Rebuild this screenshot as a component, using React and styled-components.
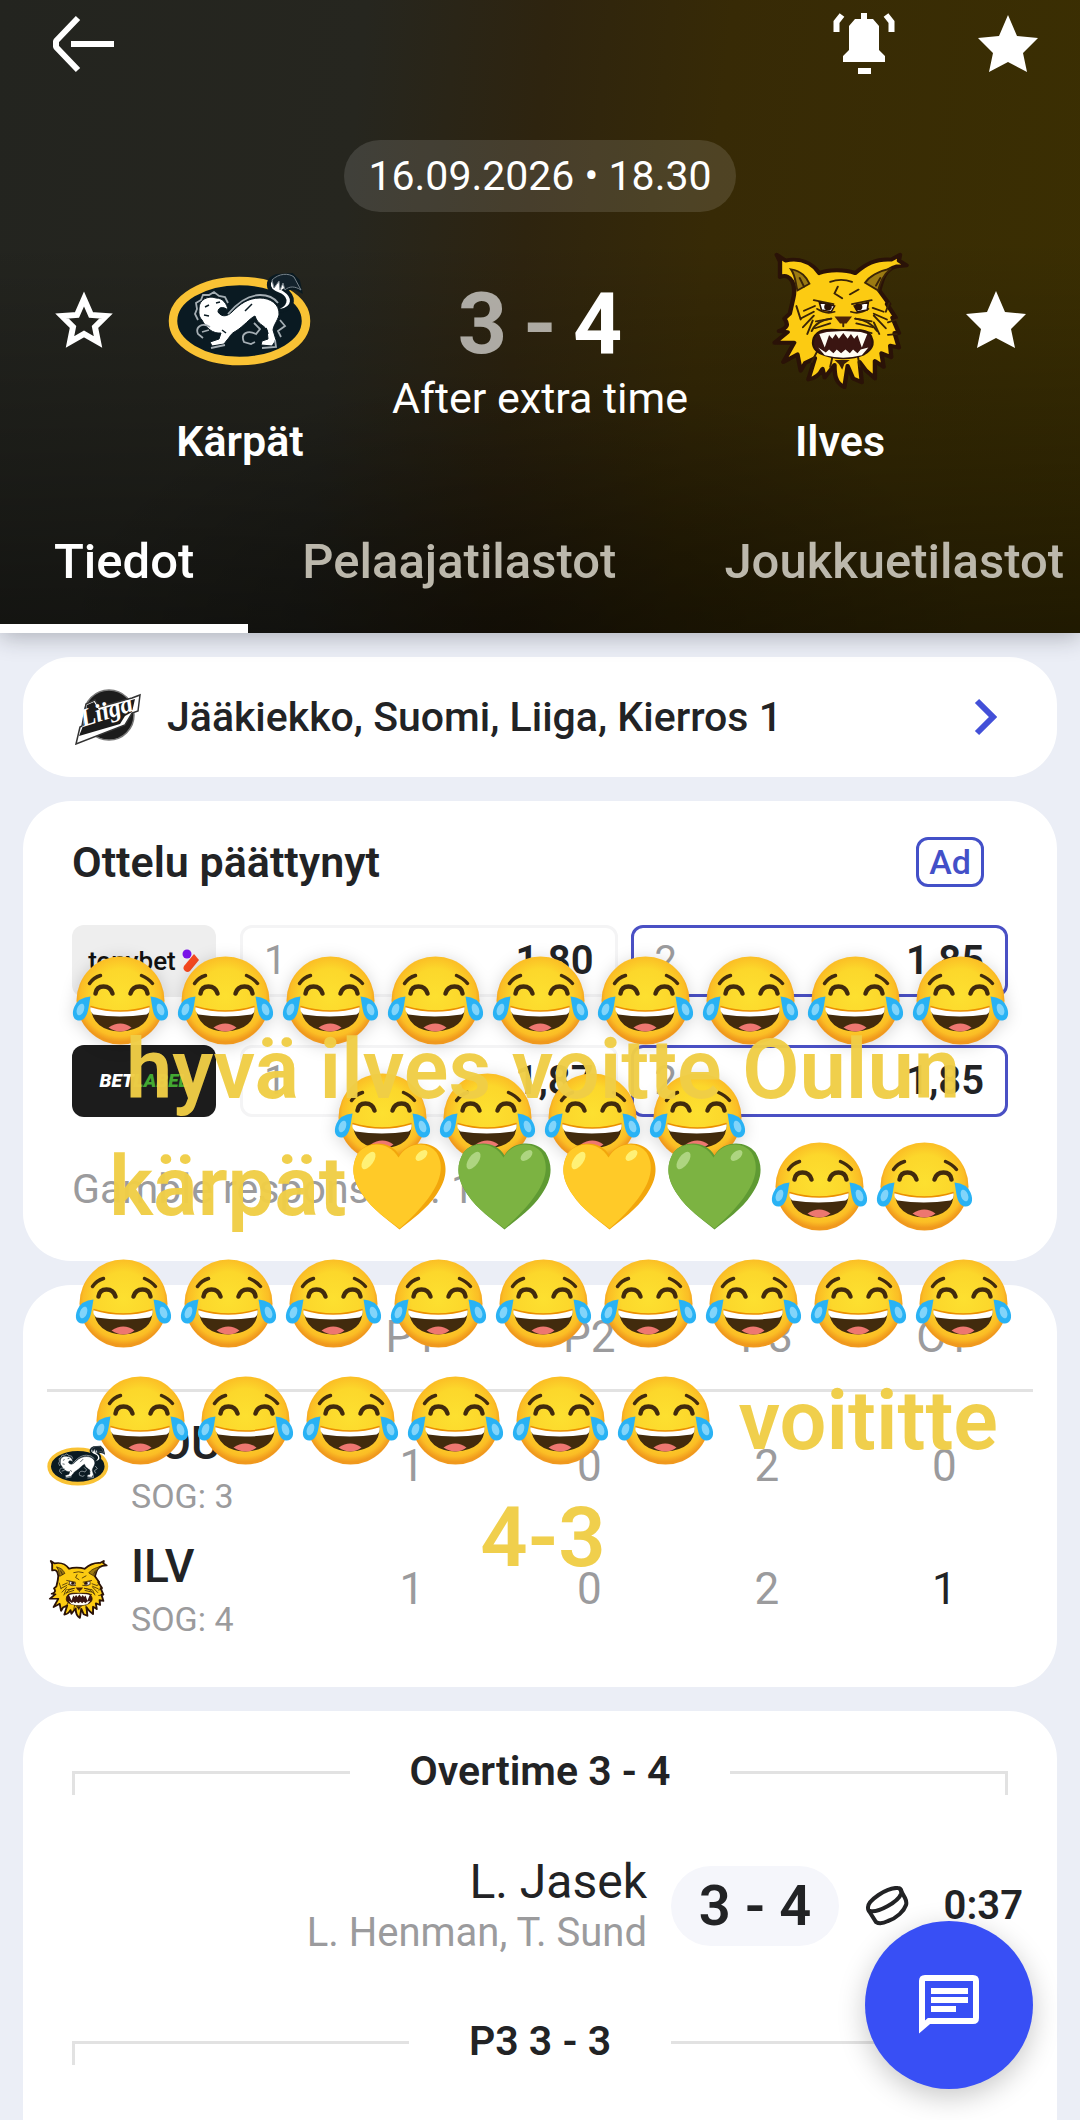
import styled, { createGlobalStyle, css } from 'styled-components';

const GlobalStyle = createGlobalStyle`
  *,
  *::before,
  *::after {
    box-sizing: border-box;
  }

  body {
    margin: 0;
    background: #ebeef6;
    color: #222325;
    font-family: Roboto, 'Liberation Sans', sans-serif;
    font-size: 41px;
    line-height: 48px;
  }

  button {
    margin: 0;
    padding: 0;
    border: 0;
    background: none;
    color: inherit;
    font: inherit;
    cursor: pointer;
  }

  svg {
    display: block;
    flex: none;
  }
`;

const Page = styled.div`
  position: relative;
  display: flex;
  flex-direction: column;
  min-height: 100vh;
  overflow: hidden;
`;

/* ---------- header ---------- */

const Header = styled.header`
  position: relative;
  color: #fff;
  background: linear-gradient(180deg, rgba(0, 0, 0, 0) 38%, rgba(0, 0, 0, 0.24) 72%, rgba(0, 0, 0, 0.46) 100%),
    radial-gradient(ellipse 460px 260px at 48% 100%, rgba(0, 0, 0, 0.3), rgba(0, 0, 0, 0)),
    linear-gradient(96deg, #23241f 0%, #26261f 32%, #2e240f 48%, #372a06 64%, #3b2f02 100%);
  box-shadow: 0 4px 22px rgba(30, 34, 44, 0.3);
`;

const TopBar = styled.div`
  display: flex;
  align-items: center;
  justify-content: space-between;
  height: 88px;
  padding: 0 24px 0 36px;
`;

const TopActions = styled.div`
  display: flex;
  gap: 48px;
`;

const IconButton = styled.button`
  display: flex;
  align-items: center;
  justify-content: center;
  width: 96px;
  height: 88px;
`;

const KickOff = styled.div`
  width: max-content;
  margin: 52px auto 0;
  padding: 12px 24px;
  border-radius: 36px;
  background: rgba(255, 255, 255, 0.12);
`;

const Teams = styled.div`
  display: grid;
  grid-template-columns: 168px 144px 1fr 144px 168px;
  align-items: start;
  padding-top: 36px;
  font-size: 43px;
`;

const FavouriteButton = styled(IconButton)`
  width: 100%;
  height: 144px;
`;

const Team = styled.div`
  display: flex;
  flex-direction: column;
  align-items: center;
  gap: 25px;
  font-weight: 600;
`;

const Score = styled.div`
  display: flex;
  flex-direction: column;
  align-items: center;
  padding-top: 26px;
`;

const Goals = styled.div`
  display: flex;
  gap: 16px;
  font-size: 86px;
  line-height: 100px;
  font-weight: 700;
`;

const Goal = styled.span`
  opacity: ${({ $faded }) => ($faded ? 0.62 : 1)};
`;

const Tabs = styled.nav`
  display: flex;
  margin-top: 42px;
  overflow: hidden;
`;

const Tab = styled.button`
  flex: none;
  height: 126px;
  padding: 0 54px 8px;
  border-bottom: 9px solid ${({ $active }) => ($active ? '#fff' : 'transparent')};
  color: ${({ $active }) => ($active ? '#fff' : '#bcb8ac')};
  font-size: 49px;
  font-weight: 500;
`;

/* ---------- cards ---------- */

const Cards = styled.main`
  flex: 1;
  display: flex;
  flex-direction: column;
  gap: 24px;
  padding: 24px 23px 0;
`;

const Card = styled.section`
  border-radius: 48px;
  background: #fff;
`;

const LeagueLink = styled.a`
  display: flex;
  align-items: center;
  height: 120px;
  padding: 0 60px 0 52px;
  gap: 26px;
  border-radius: 48px;
  background: #fff;
  color: inherit;
  font-weight: 500;
  text-decoration: none;
`;

const LeagueName = styled.span`
  flex: 1;
`;

const OddsCard = styled(Card)`
  padding: 36px 49px 48px;
`;

const OddsHead = styled.div`
  display: flex;
  align-items: center;
  justify-content: space-between;
`;

const OddsTitle = styled.h2`
  margin: 0;
  font-size: 43px;
  font-weight: 600;
`;

const AdBadge = styled.span`
  margin-right: 24px;
  padding: 0 10px;
  border: 3px solid #4350c8;
  border-radius: 12px;
  color: #4350c8;
  font-size: 34px;
  font-weight: 500;
  line-height: 44px;
`;

const OddsRow = styled.div`
  display: grid;
  grid-template-columns: 144px 1fr;
  gap: 24px;
  height: 72px;
  margin-top: ${({ $first }) => ($first ? '38px' : '48px')};
`;

const Bookmaker = styled.a`
  display: flex;
  align-items: center;
  justify-content: center;
  gap: 6px;
  border-radius: 12px;
  background: ${({ $dark }) => ($dark ? '#1c1c1c' : '#eee')};
  color: ${({ $dark }) => ($dark ? '#fff' : '#111')};
  font-size: ${({ $dark }) => ($dark ? '19px' : '26px')};
  font-weight: ${({ $dark }) => ($dark ? '900' : '500')};
  font-style: ${({ $dark }) => ($dark ? 'italic' : 'normal')};
  text-decoration: none;

  b {
    margin-left: -6px;
    color: #43a832;
  }
`;

const OddsPair = styled.div`
  display: grid;
  grid-template-columns: 1fr 1fr;
  gap: 13px;
`;

const OddButton = styled.button`
  display: flex;
  align-items: center;
  justify-content: space-between;
  padding: 0 21px;
  border: 3px solid ${({ $best }) => ($best ? '#4a50c4' : '#f4f4f5')};
  border-radius: 12px;
  font-size: 40px;
  font-weight: 600;
`;

const OddLabel = styled.span`
  color: #9b9b9d;
  font-weight: 400;
`;

const Disclaimer = styled.p`
  margin: 48px 0 0;
  color: #9b9b9d;
`;

const PeriodCard = styled(Card)`
  padding: 0 24px 36px;
`;

const PeriodTable = styled.table`
  width: 100%;
  border-collapse: collapse;
  table-layout: fixed;

  th,
  td {
    height: 124px;
    padding: 0;
    font-weight: 400;
    text-align: center;
  }

  thead th {
    height: 105px;
    border-bottom: 3px solid #e2e2e2;
    color: #9b9b9d;
    font-size: 44px;
  }

  thead th:first-child {
    width: 28%;
  }

  tbody tr:first-child > * {
    height: 137px;
    padding-top: 13px;
  }
`;

const PeriodCell = styled.td`
  color: ${({ $strong }) => ($strong ? '#222325' : '#9b9b9d')};
  font-size: 44px;
`;

const TeamCell = styled.div`
  display: flex;
  align-items: center;
  gap: 22px;
  text-align: left;
`;

const TeamCode = styled.div`
  padding-top: 6px;
  font-size: 46px;
  font-weight: 500;
  line-height: 54px;
`;

const Shots = styled.div`
  padding: 6px 0;
  color: #9b9b9d;
  font-size: 34px;
  line-height: 40px;
`;

const EventsCard = styled(Card)`
  flex: 1;
  border-radius: 48px 48px 0 0;
  padding: 36px 49px 0;
`;

const PeriodDivider = styled.h3`
  display: flex;
  align-items: center;
  gap: 60px;
  height: 48px;
  margin: 0;
  font-size: 41px;
  font-weight: 600;

  &::before,
  &::after {
    content: '';
    flex: 1;
    align-self: flex-end;
    height: 24px;
    border-top: 3px solid #e2e2e2;
  }

  &::before {
    border-left: 3px solid #e2e2e2;
  }

  &::after {
    border-right: 3px solid #e2e2e2;
  }
`;

const Event = styled.div`
  display: flex;
  align-items: center;
  justify-content: flex-end;
  height: 222px;
  margin-right: -15px;
`;

const Scorer = styled.div`
  text-align: right;
  font-size: 48px;
  line-height: 54px;

  small {
    display: block;
    color: #9b9b9d;
    font-size: 40px;
    line-height: 48px;
  }
`;

const EventScore = styled.div`
  width: 168px;
  margin: 0 26px 0 24px;
  border-radius: 40px;
  background: #f5f6fb;
  font-size: 56px;
  font-weight: 600;
  line-height: 80px;
  text-align: center;
`;

const EventTime = styled.time`
  width: 114px;
  font-size: 40px;
  font-weight: 600;
  text-align: right;
`;

const ChatButton = styled.button`
  position: fixed;
  right: 47px;
  bottom: 31px;
  display: flex;
  align-items: center;
  justify-content: center;
  width: 168px;
  height: 168px;
  border-radius: 50%;
  background: #384ff5;
  box-shadow: 0 8px 28px rgba(0, 0, 0, 0.22);
`;

/* ---------- stickers lying over the page ---------- */

const Sticker = styled.div`
  position: absolute;
  left: 0;
  right: 0;
  display: flex;
  flex-direction: column;
  align-items: center;
  pointer-events: none;
  color: rgba(240, 205, 70, 0.97);
  font-size: 83px;
  font-weight: 600;
  line-height: 117px;

  ${({ $shadow }) =>
    $shadow
      ? css`
          top: 942px;
          filter: drop-shadow(0 2px 8px rgba(0, 0, 0, 0.16));
        `
      : css`
          top: 1011px;
          padding-left: 6px;
        `}
`;

const StickerLine = styled.div`
  display: flex;
  align-items: center;
  height: 117px;
  white-space: pre;
`;

/* ---------- drawings ---------- */

function BackIcon() {
  return (
    <svg width='64' height='60' viewBox='0 0 64 60' fill='none' stroke='#fff' strokeWidth='6'>
      <path d='M26 4 4 27v6l22 23' strokeLinejoin='bevel' />
      <path d='M19 30h43' />
    </svg>
  );
}

function BellIcon() {
  return (
    <svg width='62' height='62' viewBox='0 0 62 62'>
      <path
        fill='#fff'
        d='M28 0h6v6h6l6 7v24l6 6v6H10v-6l6-6V13l6-7h6zM25 55h13v6H25z'
      />
      <path d='M9 2 3.500 9v10M53 2l5.500 7v10' fill='none' stroke='#fff' strokeWidth='6' />
    </svg>
  );
}

function StarIcon({ filled }) {
  return (
    <svg width='60' height='58' viewBox='0 0 60 58'>
      <path
        fill={filled ? '#fff' : 'none'}
        stroke={filled ? 'none' : '#fff'}
        strokeWidth='6'
        d={
          filled
            ? 'M30 0l9 21 21 2-15 15 4 19-19-10-19 10 4-19L0 23l21-2z'
            : 'M30 8l7 16 15 1-11 11 3 15-14-8-14 8 3-15L8 25l15-1z'
        }
      />
    </svg>
  );
}

function KarpatLogo({ size }) {
  return (
    <svg width={size} height={size} viewBox='0 0 144 144' aria-hidden='true'>
      <ellipse cx='71.500' cy='73' rx='66.500' ry='40' fill='#0a1a22' stroke='#f9c234' strokeWidth='8.500' />
      <path
        d='M108 60C118 57 119 51 112 47C104 44 100 41 101 35C102 30 106 29 109 28L124 27L130 33L132 42C127 39 122 39 117 42C126 48 128 60 112 63z'
        fill='#fff'
        stroke='#0a1a22'
        strokeWidth='4'
      />
      <path
        d='M104 32C111 25 121 25 126 29L133 42C127 38 121 38 117 42L115 35L112 42L111 33L106 40z'
        fill='#13222c'
        stroke='#77828a'
        strokeWidth='1'
      />
      <path
        d='M31 60C31 52 40 47 48 50C55 50 59 56 60 62C55 58 50 59 50 64C54 70 60 68 64 64C72 56 80 50 92 50C102 50 112 56 111 67C109 74 106 76 105 82L108 92L104 98L93 97L94 93L100 91L99 82C95 76 90 77 87 68C82 70 76 78 68 83C62 86 62 89 59 92L56 96L44 98L42 94L51 91L53 85C45 86 38 80 34 72C30 68 31 64 31 60z'
        fill='#fff'
        stroke='#0a1a22'
        strokeWidth='1'
      />
      <path
        d='M60 66C70 54 80 47 92 47Q104 47 110 55M30 72l-3-6 2-5-1-6 5-3 2-5 6 0 5-3 5 4 6 1 3 6M42 79c-8-5-15 0-12 7l5 4M34 84l7-2M86 75l6 6-4 5c-8-4-16-1-12 8l7 2 4-2M112 72l5 6-7 5 3 6M107 92l1 7-14 1M57 97l-14 3'
        fill='none'
        stroke='#a5aeb4'
        strokeWidth='1.800'
      />
      <path d='M37 59l4-2M48 55l4-1M36 67l5 1M84 56l-7 7M98 80l2 6M54 82l4 3' fill='none' stroke='#0a1a22' strokeWidth='1.500' />
    </svg>
  );
}

function IlvesLogo({ size }) {
  return (
    <svg width={size} height={size} viewBox='4 3 132 149' preserveAspectRatio='none' aria-hidden='true'>
      <path
        d='M9 13l-3-7 8 6c13-3 24 2 31 13 8-4 24-4 33 0 9-9 18-15 33-14l8-5-1 6 7 5-9 1c-11 3-13 12-16 25l9 14-2 0 8 14-3 0 6 16-4 0 4 15-8-2 1 12-9-4 2 14-8-6v18l-8-8-6-9 2 21-8-4-5-13-3 22c-9-5-9-15-9-23l-9 13-2-9c-3 7-7 10-13 11l6-22-9 5-4 8-3-17-13 8 10-20H4l12-11-8-1c8-3 9-7 5-13l5-5 3-15c3-13-1-28-12-23z'
        transform='translate(6 4)'
        fill='#fccb12'
        stroke='#2a1207'
        strokeWidth='4'
        strokeLinejoin='round'
      />
      <g fill='none' stroke='#3a2407' strokeWidth='1.800' strokeLinecap='round'>
        <path d='M25 25c10 2 14 8 17 15l-11 7c-2-6-1-14-6-22z' fill='#9b7a12' />
        <path d='M117 24c-12 3-20 8-24 15l12 8c2-8 4-16 12-23z' fill='#9b7a12' />
        <path d='M33 34l4 9M107 34l-4 8M61 38q10-4 20 0M68 43l-3 7 7 5M79 51l8-5' />
        <path d='M46 57l18 4M99 57l-18 4M49 66q8 6 16 3M96 66q-8 6-16 3' />
        <path d='M37 68l10-5M34 76l12-7M36 85l10-12M40 92l5-14M110 69l-10-4M113 77l-12-6M112 86l-11-13M106 92l-5-12' />
        <path d='M48 79l14-3M47 86l14-5M49 92l9-3M99 79l-15-3M100 85l-15-4M99 91l-11-3M30 63l4 14M115 60l-3 9M122 77l-8 3M122 92l-8 1' />
        <path d='M62 76q-14 2-18 13M84 76q14 2 20 13M73 80v4M44 121l6-13M61 126l3-15M88 126l-2-14' />
      </g>
      <path d='M51 59l14 4-3 6-9-2zM96 59l-13 4 3 6 9-2z' fill='#fff' stroke='#2a1207' strokeWidth='1.500' />
      <circle cx='59' cy='64' r='3.500' fill='#2a1207' />
      <circle cx='87' cy='64' r='3.500' fill='#2a1207' />
      <path d='M65 74h16l-5 7h-6z' fill='#4b2208' />
      <path
        d='M46 96c5-11 15-8 27-8s23-2 26 8c3 8-1 13-7 17-13 6-28 5-40-1-7-4-8-9-6-16z'
        fill='#3a1511'
        stroke='#2a1207'
        strokeWidth='2'
      />
      <path
        d='M51 92l5 14 4-13 3 4 3-5 3 5 4-6 4 6 3-5 3 5 3-4 4 13 5-14-6-2-16-1-15 1zM50 106l7 5 3-3 4 4 3-4 4 4 4-4 4 4 3-4 4 4 3-4 7-2-6 8q-17 5-34 0z'
        fill='#fffdf4'
      />
      <path d='M65 119h14l-5 4-2 6-3-6z' fill='#3a1e07' />
    </svg>
  );
}

function LiigaLogo() {
  return (
    <svg width='66' height='56' viewBox='0 0 66 56' role='img' aria-label='Liiga'>
      <circle cx='34' cy='26' r='25' fill='#1c1c1c' stroke='#777' strokeWidth='1.500' />
      <path d='M1 55l4-17 2-1 4-22 9-4 4 7 33-9 8-3-2 16-6 2-7 12z' fill='#fff' stroke='#333' strokeWidth='1.500' />
      <path d='M8 37L12 16l7-3 5 8 36-11-3 13-7 4-5 8L4 47z' fill='#1c1c1c' />
      <text
        x='8'
        y='38'
        transform='rotate(-18 8 38)'
        fill='#fff'
        fontFamily='Liberation Serif, serif'
        fontSize='25'
        fontWeight='700'
        fontStyle='italic'
      >
        Liiga
      </text>
    </svg>
  );
}

function ChevronIcon() {
  return (
    <svg width='26' height='38' viewBox='0 0 26 38' fill='none' stroke='#4350d8' strokeWidth='6'>
      <path d='M6 3l16 16L6 35' />
    </svg>
  );
}

function TonyMark() {
  return (
    <svg width='18' height='24' viewBox='0 0 18 24'>
      <path d='M12 5l5 6-9 11a4 4 0 0 1-6-5z' fill='#f5481f' />
      <circle cx='5' cy='5' r='4.500' fill='#7a12e8' />
    </svg>
  );
}

function PuckIcon() {
  return (
    <svg width='44' height='40' viewBox='0 0 44 40' fill='none' stroke='#222325' strokeWidth='4'>
      <path d='M3 22C2 15 22 1 33 2c3 0 4 3 3 6C33 16 13 27 5 25c-2 0-2-2-2-3z' />
      <path d='M4 25l7 11c3 2 8 1 12-1 9-3 16-10 18-16 1-3 0-5-1-7l-5-9' />
    </svg>
  );
}

function ChatIcon() {
  return (
    <svg width='62' height='62' viewBox='0 0 62 62' fill='none' stroke='#fff' strokeWidth='6'>
      <path d='M4 53V7q0-3 3-3h48q3 0 3 3v37q0 3-3 3H11z' />
      <path d='M13 17h37M13 26h37M13 35h25' />
    </svg>
  );
}

function JoyEmoji() {
  return (
    <svg width='105' height='105' viewBox='-52.500 -52.500 105 105' role='img' aria-label='😂'>
      <defs>
        <radialGradient id='joy-skin' cx='0.5' cy='0.45' r='0.52'>
          <stop offset='0' stopColor='#fde030' />
          <stop offset='0.6' stopColor='#fcd72b' />
          <stop offset='0.88' stopColor='#fbbd25' />
          <stop offset='1' stopColor='#f0991d' />
        </radialGradient>
      </defs>
      <circle r='44' fill='url(#joy-skin)' />
      <g fill='none' stroke='#422b0d' strokeLinecap='round'>
        <path d='M-31-17q4-6 11-8M21-25q7 3 11 8' strokeWidth='3.500' />
        <path d='M-25-7q1-7 8-7t9 7M10-7q2-7 9-7t8 7' strokeWidth='4.500' />
      </g>
      <path d='M-30 6q30 9 59 0q1 23-29 25q-28-1-30-25z' fill='#422b0d' />
      <path d='M-30 6q30 9 59 0q1 6-3 8q-27 4-53 0q-4-3-3-8z' fill='#fff' />
      <path d='M-12 27q12-8 23 0q-5 4-11 4t-12-4z' fill='#ed7770' />
      <path d='M-30 6q30 9 59 0' fill='none' stroke='#eb8f00' strokeWidth='1.500' />
      <g fill='#29b2f4'>
        <path d='M-30-4q-12 1-16 10c-4 9 0 15 6 14c8-2 8-14 10-24z' />
        <path d='M30-4q12 1 16 10c4 9 0 15-6 14c-8-2-8-14-10-24z' />
      </g>
      <g fill='#81d4fa'>
        <ellipse cx='-40' cy='9' rx='3.500' ry='6' transform='rotate(20 -40 9)' />
        <ellipse cx='40' cy='9' rx='3.500' ry='6' transform='rotate(-20 40 9)' />
      </g>
    </svg>
  );
}

function HeartEmoji({ green }) {
  const [fill, edge, shine] = green ? ['#7cb342', '#5f9a33', '#aed581'] : ['#ffca28', '#f2a60c', '#fff176'];
  return (
    <svg width='105' height='105' viewBox='-52.500 -52.500 105 105' role='img' aria-label={green ? '💚' : '💛'}>
      <path
        d='M0-31C8-46 31-47 41-34C50-19 46-5 37 8C27 23 12 33 0 43C-12 33-27 23-37 8C-46-5-50-19-41-34C-31-47-8-46 0-31z'
        fill={edge}
      />
      <path
        d='M-1-29C8-45 28-46 37-34C45-21 41-6 32 7C23 21 10 33 0 42C-12 33-27 23-37 8C-46-5-50-19-41-34C-31-46-10-45-1-29z'
        fill={fill}
      />
      <ellipse cx='-31' cy='-26' rx='5' ry='10' transform='rotate(35 -31 -26)' fill={shine} />
      <ellipse cx='22' cy='-31' rx='4' ry='7' transform='rotate(50 22 -31)' fill={shine} />
    </svg>
  );
}

/* ---------- data ---------- */

const tabs = ['Tiedot', 'Pelaajatilastot', 'Joukkuetilastot'];

const odds = [
  { bookmaker: 'tonybet', home: '1,80', away: '1,85' },
  { bookmaker: 'betlabel', home: '1,87', away: '1,85' },
];

const periods = ['P1', 'P2', 'P3', 'OT'];

const rows = [
  { code: 'KOU', shots: 3, goals: [1, 0, 2, 0], Logo: KarpatLogo },
  { code: 'ILV', shots: 4, goals: [1, 0, 2, 1], Logo: IlvesLogo },
];

const joys = (count) => Array.from({ length: count }, (_, i) => <JoyEmoji key={i} />);

export default function App() {
  return (
    <Page>
      <GlobalStyle />
      <Header>
        <TopBar>
          <IconButton aria-label='Takaisin'>
            <BackIcon />
          </IconButton>
          <TopActions>
            <IconButton aria-label='Ilmoitukset'>
              <BellIcon />
            </IconButton>
            <IconButton aria-label='Suosikki'>
              <StarIcon filled />
            </IconButton>
          </TopActions>
        </TopBar>
        <KickOff>16.09.2026 • 18.30</KickOff>
        <Teams>
          <FavouriteButton aria-label='Lisää Kärpät suosikkeihin'>
            <StarIcon />
          </FavouriteButton>
          <Team>
            <KarpatLogo size={144} />
            Kärpät
          </Team>
          <Score>
            <Goals>
              <Goal $faded>3</Goal>
              <Goal $faded>-</Goal>
              <Goal>4</Goal>
            </Goals>
            After extra time
          </Score>
          <Team>
            <IlvesLogo size={144} />
            Ilves
          </Team>
          <FavouriteButton aria-label='Poista Ilves suosikeista'>
            <StarIcon filled />
          </FavouriteButton>
        </Teams>
        <Tabs>
          {tabs.map((tab, i) => (
            <Tab key={tab} $active={i === 0}>
              {tab}
            </Tab>
          ))}
        </Tabs>
      </Header>

      <Cards>
        <LeagueLink href='#liiga'>
          <LiigaLogo />
          <LeagueName>Jääkiekko, Suomi, Liiga, Kierros 1</LeagueName>
          <ChevronIcon />
        </LeagueLink>

        <OddsCard>
          <OddsHead>
            <OddsTitle>Ottelu päättynyt</OddsTitle>
            <AdBadge>Ad</AdBadge>
          </OddsHead>
          {odds.map(({ bookmaker, home, away }, i) => (
            <OddsRow key={bookmaker} $first={i === 0}>
              {i === 0 ? (
                <Bookmaker href='#tonybet'>
                  tonybet
                  <TonyMark />
                </Bookmaker>
              ) : (
                <Bookmaker href='#betlabel' $dark>
                  BET<b>LABEL</b>
                </Bookmaker>
              )}
              <OddsPair>
                <OddButton>
                  <OddLabel>1</OddLabel>
                  {home}
                </OddButton>
                <OddButton $best>
                  <OddLabel>2</OddLabel>
                  {away}
                </OddButton>
              </OddsPair>
            </OddsRow>
          ))}
          <Disclaimer>Gamble responsibly. 18+</Disclaimer>
        </OddsCard>

        <PeriodCard>
          <PeriodTable>
            <thead>
              <tr>
                <th aria-label='Joukkue' />
                {periods.map((period) => (
                  <th key={period}>{period}</th>
                ))}
              </tr>
            </thead>
            <tbody>
              {rows.map(({ code, shots, goals, Logo }) => (
                <tr key={code}>
                  <th scope='row'>
                    <TeamCell>
                      <Logo size={62} />
                      <div>
                        <TeamCode>{code}</TeamCode>
                        <Shots>SOG: {shots}</Shots>
                      </div>
                    </TeamCell>
                  </th>
                  {goals.map((goal, i) => (
                    <PeriodCell key={periods[i]} $strong={i === 3 && goal > 0}>
                      {goal}
                    </PeriodCell>
                  ))}
                </tr>
              ))}
            </tbody>
          </PeriodTable>
        </PeriodCard>

        <EventsCard>
          <PeriodDivider>Overtime 3 - 4</PeriodDivider>
          <Event>
            <Scorer>
              L. Jasek
              <small>L. Henman, T. Sund</small>
            </Scorer>
            <EventScore>3 - 4</EventScore>
            <PuckIcon />
            <EventTime>0:37</EventTime>
          </Event>
          <PeriodDivider>P3 3 - 3</PeriodDivider>
        </EventsCard>
      </Cards>

      <ChatButton aria-label='Keskustelu'>
        <ChatIcon />
      </ChatButton>

      <Sticker $shadow>
        <StickerLine>{joys(9)}</StickerLine>
        <StickerLine>{joys(4)}</StickerLine>
      </Sticker>
      <Sticker>
        <StickerLine>hyvä ilves voitte Oulun</StickerLine>
        <StickerLine>
          kärpät
          <HeartEmoji />
          <HeartEmoji green />
          <HeartEmoji />
          <HeartEmoji green />
          {joys(2)}
        </StickerLine>
        <StickerLine>{joys(9)}</StickerLine>
        <StickerLine>{joys(6)} voititte</StickerLine>
        <StickerLine>4-3</StickerLine>
      </Sticker>
    </Page>
  );
}
